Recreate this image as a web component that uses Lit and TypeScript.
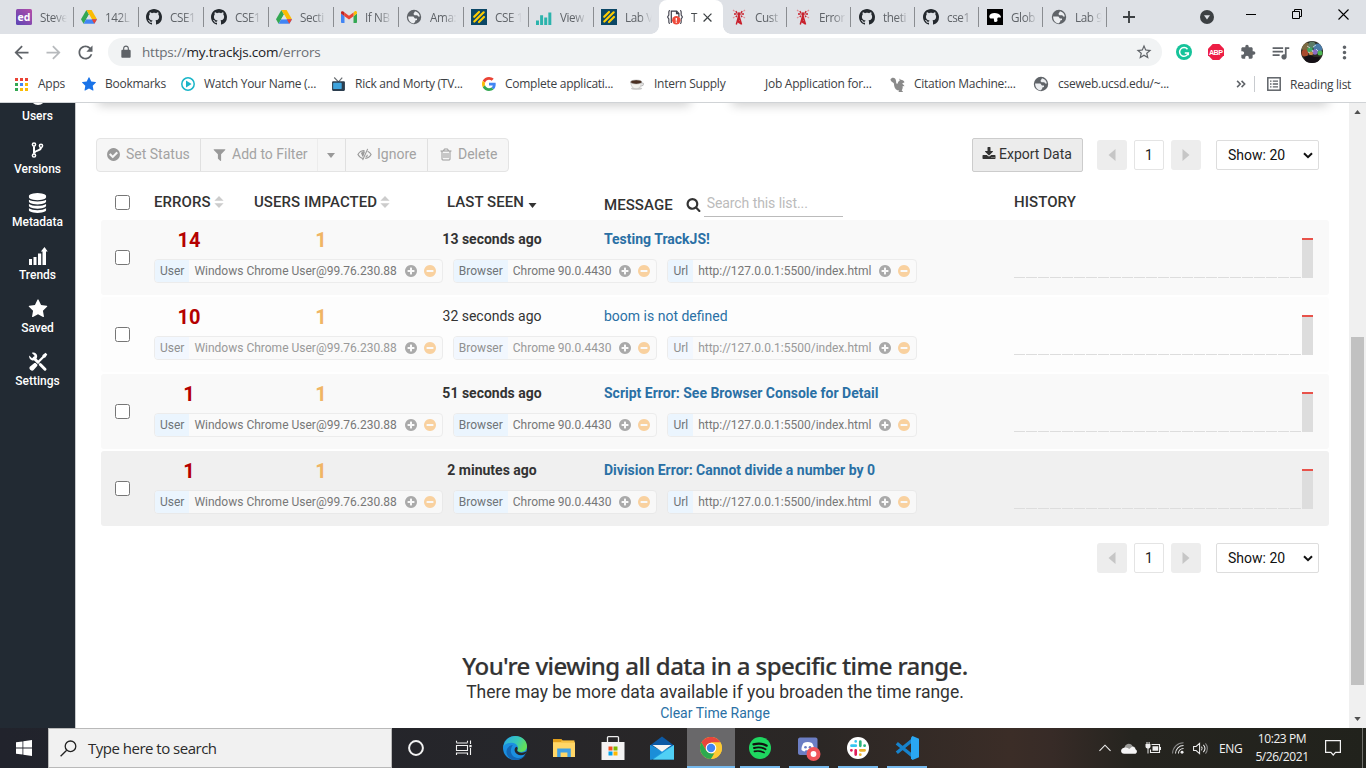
import { LitElement, html, svg, css, nothing, TemplateResult, SVGTemplateResult } from "lit";
import { customElement, property } from "lit/decorators.js";
import { classMap } from "lit/directives/class-map.js";

/* ---------- icon library ---------- */

type Glyph = { box: string; body: SVGTemplateResult };

const fa = (d: string): Glyph => ({ box: "0 0 1792 1792", body: svg`<path fill="currentColor" d=${d}/>` });
const md = (d: string): Glyph => ({ box: "0 0 24 24", body: svg`<path fill="currentColor" d=${d}/>` });
const art = (box: string, body: SVGTemplateResult): Glyph => ({ box, body });

const DISC =
  "q0 209-103 385.5t-279.5 279.5-385.5 103-385.5-103-279.5-279.5-103-385.5 103-385.5 279.5-279.5 385.5-103 385.5 103 279.5 279.5 103 385.5z";

const ICONS: Record<string, Glyph> = {
  star: fa("M1728 647q0 22-26 48l-363 354 86 500q1 7 1 20 0 21-10.5 35.5t-30.5 14.5q-19 0-40-12l-449-236-449 236q-22 12-40 12-21 0-31.5-14.5t-10.5-35.5q0-6 2-20l86-500-364-354q-25-27-25-48 0-37 56-46l502-73 225-455q19-41 49-41t49 41l225 455 502 73q56 9 56 46z"),
  database: fa("M896 768q237 0 443-43t325-127v170q0 69-103 128t-280 93.5-385 34.5-385-34.5-280-93.5-103-128v-170q119 84 325 127t443 43zm0 768q237 0 443-43t325-127v170q0 69-103 128t-280 93.5-385 34.5-385-34.5-280-93.5-103-128v-170q119 84 325 127t443 43zm0-384q237 0 443-43t325-127v170q0 69-103 128t-280 93.5-385 34.5-385-34.5-280-93.5-103-128v-170q119 84 325 127t443 43zm0-1152q208 0 385 34.5t280 93.5 103 128v128q0 69-103 128t-280 93.5-385 34.5-385-34.5-280-93.5-103-128v-128q0-69 103-128t280-93.5 385-34.5z"),
  checkCircle: fa("M1412 734q0-28-18-46l-91-90q-19-19-45-19t-45 19l-408 407-226-226q-19-19-45-19t-45 19l-91 90q-18 18-18 46 0 27 18 45l362 362q19 19 45 19 27 0 46-19l543-543q18-18 18-45zm252 162" + DISC),
  plusCircle: fa("M1344 960v-128q0-26-19-45t-45-19h-256v-256q0-26-19-45t-45-19h-128q-26 0-45 19t-19 45v256h-256q-26 0-45 19t-19 45v128q0 26 19 45t45 19h256v256q0 26 19 45t45 19h128q26 0 45-19t19-45v-256h256q26 0 45-19t19-45zm320-64" + DISC),
  minusCircle: fa("M1344 960v-128q0-26-19-45t-45-19h-768q-26 0-45 19t-19 45v128q0 26 19 45t45 19h768q26 0 45-19t19-45zm320-64" + DISC),
  filter: fa("M1595 295q17 41-14 70l-493 493v742q0 42-39 59-13 5-25 5-27 0-45-19l-256-256q-19-19-19-45v-486l-493-493q-31-29-14-70 17-39 59-39h1280q42 0 59 39z"),
  search: fa("M1216 832q0-185-131.5-316.5t-316.5-131.5-316.5 131.5-131.5 316.5 131.5 316.5 316.5 131.5 316.5-131.5 131.5-316.5zm512 832q0 52-38 90t-90 38q-54 0-90-38l-343-342q-179 124-399 124-143 0-273.5-55.5t-225-150-150-225-55.5-273.5 55.5-273.5 150-225 225-150 273.5-55.5 273.5 55.5 225 150 150 225 55.5 273.5q0 220-124 399l343 343q37 37 37 90z"),
  download: fa("M1344 1344q0-26-19-45t-45-19-45 19-19 45 19 45 45 19 45-19 19-45zm256 0q0-26-19-45t-45-19-45 19-19 45 19 45 45 19 45-19 19-45zm128-224v320q0 40-28 68t-68 28h-1472q-40 0-68-28t-28-68v-320q0-40 28-68t68-28h465l135 136q58 56 136 56t136-56l136-136h464q40 0 68 28t28 68zm-325-569q17 41-14 70l-448 448q-18 19-45 19t-45-19l-448-448q-31-29-14-70 17-39 59-39h256v-448q0-26 19-45t45-19h256q26 0 45 19t19 45v448h256q42 0 59 39z"),
  trash: fa("M704 736v576q0 14-9 23t-23 9h-64q-14 0-23-9t-9-23v-576q0-14 9-23t23-9h64q14 0 23 9t9 23zm256 0v576q0 14-9 23t-23 9h-64q-14 0-23-9t-9-23v-576q0-14 9-23t23-9h64q14 0 23 9t9 23zm256 0v576q0 14-9 23t-23 9h-64q-14 0-23-9t-9-23v-576q0-14 9-23t23-9h64q14 0 23 9t9 23zm128 724v-948h-896v948q0 22 7 40.5t14.5 27 10.5 8.5h832q3 0 10.5-8.5t14.5-27 7-40.5zm-672-1076h448l-48-117q-7-9-17-11h-317q-10 2-17 11zm928 32v64q0 14-9 23t-23 9h-96v948q0 83-47 143.5t-113 60.5h-832q-66 0-113-58.5t-47-141.5v-952h-96q-14 0-23-9t-9-23v-64q0-14 9-23t23-9h309l70-167q15-37 54-63t79-26h320q40 0 79 26t54 63l70 167h309q14 0 23 9t9 23z"),
  caretDown: art("0 0 8 5", svg`<path fill="currentColor" d="M0 0h8L4 5z"/>`),
  sort: art("0 0 10 14", svg`<path fill="currentColor" d="M5 1l4.6 4.8H.4zM5 13L.4 8.2h9.2z"/>`),
  triLeft: art("0 0 8 12", svg`<path fill="currentColor" d="M7.5 0v12L.5 6z"/>`),
  triRight: art("0 0 8 12", svg`<path fill="currentColor" d="M.5 0v12l7-6z"/>`),
  eyeSlash: art("0 0 16 14", svg`<g fill="none" stroke="currentColor" stroke-width="1.2"><path d="M6.6 11.2C4 10.700 2 9 1 7c1.400-2.600 4-4.300 7-4.300M11.300 3.500C13 4.200 14.300 5.500 15 7c-1.400 2.600-3.700 4-6.200 4.300"/><path d="M11.400 1L6 13M4.900 6.800C4.900 5 6.200 3.800 8 3.800M11 7.200c0 1.300-.7 2.300-1.800 2.800"/></g><path fill="currentColor" d="M8.500 4C6.500 4 5 5.200 5 7c0 1.200.6 2 1.500 2.600z"/>`),
  fork: art("0 0 14 18", svg`<g fill="none" stroke="currentColor" stroke-width="1.500"><circle cx="3.500" cy="3.500" r="1.600"/><circle cx="3.500" cy="14.500" r="1.600"/><circle cx="10.500" cy="4.800" r="1.600"/></g><path fill="none" stroke="currentColor" stroke-width="2" d="M3.500 5.200v7.600M10.500 6.500c0 4-6.500 2.200-6.800 5.800"/>`),
  trends: art("0 0 20 20", svg`<path fill="currentColor" d="M1 13h3v6H1zM5.500 11h3v8h-3zM10 7.500h3.200V19H10zM14.500 5.500h-1.600L16.500 1l3.200 4.500H18V19h-3.500z"/>`),
  wrench: art("0 0 20 20", svg`<path fill="none" stroke="currentColor" stroke-width="3" stroke-linecap="round" d="M6 6.200l4 4M12.300 12.500l4.700 4.700"/><path fill="currentColor" d="M1.200 3.600l2.800 2.600 2-.6.5-2L3.800 1C6-.1 8.900 1.300 9.200 4c.1 2.600-2 4.800-4.800 4.400C2 8 .7 5.800 1.200 3.600zM17.600.7l1.700 1.700-2 3.200-1.500.5-5 5-1.600-1.600 5-5 .4-1.600zM7.600 10.900l1.900 1.900-.3 1.200-3.800 4.300c-1.400 1.400-5.200-1.400-3.600-3.600l4.600-3.700z"/>`),
  user: art("0 0 20 20", svg`<circle cx="10" cy="10.500" r="7.500" fill="currentColor"/>`),
  chevron: art("0 0 10 7", svg`<path fill="none" stroke="currentColor" stroke-width="2" d="M1 1.200l4 4 4-4"/>`),

  github: art("0 0 16 16", svg`<path fill="#24292e" d="M8 0C3.580 0 0 3.580 0 8c0 3.540 2.290 6.530 5.470 7.590.4.070.55-.17.55-.38 0-.19-.01-.82-.01-1.490-2.010.37-2.530-.49-2.690-.94-.09-.23-.48-.94-.82-1.130-.28-.15-.68-.52-.01-.53.63-.01 1.080.58 1.230.82.72 1.210 1.870.87 2.330.66.070-.52.28-.87.51-1.070-1.780-.2-3.640-.89-3.640-3.950 0-.87.31-1.590.82-2.150-.08-.2-.36-1.020.08-2.120 0 0 .67-.21 2.200.82.64-.18 1.320-.27 2-.27s1.360.09 2 .27c1.530-1.040 2.200-.82 2.200-.82.44 1.100.16 1.920.08 2.120.51.56.82 1.270.82 2.150 0 3.070-1.870 3.750-3.650 3.950.29.25.54.73.54 1.480 0 1.070-.01 1.930-.01 2.200 0 .21.15.46.55.38A8.010 8.010 0 0 0 16 8c0-4.420-3.580-8-8-8z"/>`),
  globe: art("0 0 16 16", svg`<circle cx="8" cy="8" r="7.200" fill="#5f6368"/><path fill="#eceef1" d="M2.100 7.600h5.300l1.500 1.800H11v1.500l-1.700.6-.2 1.600-1.700 1.300C4.300 14.200 2.100 11.300 2.100 7.600zM9 2.200c2.600.5 4.600 2.700 4.900 5.300h-1.700l-.9-1.200H8.500L7.400 5l.9-1.400z"/>`),
  ed: art("0 0 16 16", svg`<defs><linearGradient id="edg" x1="0" y1="1" x2="1" y2="0"><stop offset="0" stop-color="#5b45b5"/><stop offset="1" stop-color="#b44da8"/></linearGradient></defs><rect width="16" height="16" rx="1.500" fill="url(#edg)"/><text x="8" y="11.800" text-anchor="middle" font-family="Open Sans, sans-serif" font-weight="700" font-size="10.500" fill="#fff">ed</text>`),
  drive: art("0 0 16 14", svg`<path fill="#34a853" d="M5.400 0L0 9.300 2.600 13.800 8 4.500z"/><path fill="#fbbc04" d="M5.400 0h5.200L16 9.300h-5.200z"/><path fill="#4285f4" d="M5.200 9.300H16l-2.600 4.500H2.600z"/><path fill="#ea4335" d="M13.300 13.800L10.800 9.300H16z"/><path fill="#dee1e6" d="M8 4.500l2.800 4.800H5.200z"/>`),
  gmail: art("0 0 16 12", svg`<path fill="#4285f4" d="M.8 12H3.500V5.200L0 2.600v8.600c0 .4.400.8.800.8z"/><path fill="#34a853" d="M12.500 12h2.700c.4 0 .8-.4.8-.8V2.600l-3.500 2.600z"/><path fill="#fbbc04" d="M12.500 1.400v3.800L16 2.600V1.500c0-1.400-1.500-2-2.500-1z"/><path fill="#ea4335" d="M3.500 5.200V1.400L8 4.700l4.500-3.300v3.800L8 8.600z"/><path fill="#c5221f" d="M0 1.500v1.100l3.500 2.600V1.400L2.400.5C1.300-.3 0 .3 0 1.500z"/>`),
  ucsd: art("0 0 16 16", svg`<rect width="16" height="16" fill="#0b4766"/><path stroke="#ffcd00" stroke-width="2.200" stroke-linecap="round" d="M3.200 7.800L8 3M3.300 12.500L12.700 3.300M8 13l5-5"/>`),
  bars: art("0 0 14 14", svg`<path fill="#2bb3ac" d="M0 10h2.600v4H0zM3.600 5.500h2.600V14H3.600zM7.200 7.500h2.600V14H7.200zM10.800 3h2.600v11h-2.600z"/>`),
  trackjs: art("0 0 16 16", svg`<path fill="none" stroke="#4a4a55" stroke-width="1.200" d="M3 1.500C1.300 1.500 2 4 1.800 6L.6 8l1.200 2c.2 2-.5 4.500 1.200 4.500M13 1.500c1.700 0 1 2.500 1.200 4.500l1.200 2-1.200 2c-.1 2 .4 4.500-1.200 4.500"/><path fill="#fff" stroke="#3d3d4a" stroke-width="1.200" d="M4.300 14V2.200h5.400l2.200 2.300V8M9.500 2.200v2.500h2.400"/><circle cx="9.300" cy="11.300" r="4.200" fill="#ee4b3c"/><path stroke="#fff" stroke-width="1.300" d="M9.300 8.900v2.900M9.300 12.600v1.200"/>`),
  tower: art("0 0 16 16", svg`<g fill="none" stroke="#c8202c" stroke-width="1.400"><path d="M5.300 15.500L7.800 6l2.800 9.500M6 12.500h4M7 9.500h2.200M5.900 12.500l3.300-3M10.200 15l-4-2.700"/><path d="M4.800 2.200L6 4M3 5h2.500M4.800 8L6 6.600M11.200 2.200L10 4M13 5h-2.500M11.200 8L10 6.600"/></g><circle cx="8" cy="5" r="1.800" fill="#c8202c"/><path stroke="#e58d93" stroke-width="1.200" d="M2 1l1.500 1.300M14 1l-1.500 1.300M2 9l1.500-1M14 9l-1.500-1"/>`),
  globus: art("0 0 16 16", svg`<rect width="16" height="16" fill="#000"/><path fill="#fff" d="M2.300 7C2.700 4.800 5 3.900 7.500 3.900c2.700 0 5.300.8 6.200 3.100l.3 1.500H11l-.8 1.200.3 2.300c-.9 1.300-2.600 1.400-3.300.6L6.800 9.500H3.700C2.600 9.300 2.200 8.100 2.300 7z"/>`),
  close: md("M19 6.400L17.600 5 12 10.600 6.400 5 5 6.400 10.600 12 5 17.600 6.400 19 12 13.400 17.600 19 19 17.600 13.400 12z"),
  plus: art("0 0 12 12", svg`<path stroke="#3c4043" stroke-width="1.900" d="M6 0v12M0 6h12"/>`),
  tabSearch: art("0 0 14 14", svg`<circle cx="7" cy="7" r="7" fill="#3c4043"/><path fill="#dee1e6" d="M4 5.200h6L7 9.500z"/>`),
  winMin: art("0 0 11 11", svg`<path stroke="#000" d="M0 5.500h10"/>`),
  winMax: art("0 0 11 11", svg`<path fill="none" stroke="#000" d="M.5 2.500h7v7h-7zM2.500 2.500v-2h7v7h-2"/>`),
  winClose: art("0 0 11 11", svg`<path fill="none" stroke="#000" stroke-width="1.100" d="M.5.500l10 10M10.500.5l-10 10"/>`),
  back: md("M20 11H7.830l5.590-5.590L12 4l-8 8 8 8 1.410-1.410L7.830 13H20v-2z"),
  forward: md("M4 11h12.170l-5.590-5.590L12 4l8 8-8 8-1.410-1.410L16.170 13H4v-2z"),
  refresh: md("M17.650 6.350C16.200 4.900 14.210 4 12 4c-4.420 0-7.990 3.580-7.990 8s3.570 8 7.990 8c3.730 0 6.840-2.550 7.730-6h-2.080c-.82 2.330-3.040 4-5.650 4-3.310 0-6-2.690-6-6s2.690-6 6-6c1.660 0 3.140.69 4.220 1.780L13 11h7V4l-2.350 2.350z"),
  lock: md("M18 8h-1V6c0-2.760-2.240-5-5-5S7 3.240 7 6v2H6c-1.100 0-2 .9-2 2v10c0 1.100.9 2 2 2h12c1.100 0 2-.9 2-2V10c0-1.100-.9-2-2-2zM9 8V6c0-1.660 1.340-3 3-3s3 1.340 3 3v2z"),
  starLine: md("M22 9.240l-7.190-.62L12 2 9.190 8.630 2 9.240l5.460 4.730L5.820 21 12 17.270 18.180 21l-1.630-7.030L22 9.240zM12 15.400l-3.760 2.270 1-4.280-3.320-2.880 4.380-.38L12 6.100l1.710 4.040 4.380.38-3.320 2.880 1 4.280L12 15.400z"),
  puzzle: md("M20.500 11H19V7c0-1.100-.9-2-2-2h-4V3.500C13 2.120 11.880 1 10.500 1S8 2.120 8 3.500V5H4c-1.100 0-1.990.9-1.990 2v3.800H3.500c1.490 0 2.700 1.210 2.700 2.700s-1.210 2.700-2.700 2.700H2V20c0 1.100.9 2 2 2h3.800v-1.500c0-1.490 1.210-2.700 2.700-2.700 1.490 0 2.700 1.210 2.700 2.700V22H17c1.100 0 2-.9 2-2v-4h1.500c1.380 0 2.500-1.120 2.500-2.500S21.880 11 20.500 11z"),
  queue: md("M15 6H3v2h12V6zm0 4H3v2h12v-2zM3 16h8v-2H3v2zM17 6v8.180c-.31-.11-.65-.18-1-.18-1.660 0-3 1.340-3 3s1.340 3 3 3 3-1.340 3-3V8h3V6h-5z"),
  dots: md("M12 8c1.100 0 2-.9 2-2s-.9-2-2-2-2 .9-2 2 .9 2 2 2zm0 2c-1.100 0-2 .9-2 2s.9 2 2 2 2-.9 2-2-.9-2-2-2zm0 6c-1.100 0-2 .9-2 2s.9 2 2 2 2-.9 2-2-.9-2-2-2z"),
  grammarly: art("0 0 16 16", svg`<circle cx="8" cy="8" r="8" fill="#15c39a"/><path fill="none" stroke="#fff" stroke-width="1.500" d="M11.500 5.200A4.400 4.400 0 1 0 12.300 9H8.800M12.300 8.300v3"/>`),
  abp: art("0 0 16 16", svg`<path fill="#ed1e45" d="M4.700 0h6.600L16 4.700v6.600L11.300 16H4.700L0 11.300V4.700z"/><text x="8" y="10.700" text-anchor="middle" font-family="Liberation Sans, sans-serif" font-weight="700" font-size="7.200" textLength="14" fill="#fff">ABP</text>`),
  avatar: art("0 0 22 22", svg`<defs><clipPath id="avc"><circle cx="11" cy="11" r="11"/></clipPath></defs><g clip-path="url(#avc)"><rect width="22" height="22" fill="#2a2a22"/><circle cx="5" cy="6" r="4.500" fill="#7d6a42"/><circle cx="11" cy="4" r="3.500" fill="#5b7c66"/><circle cx="17" cy="7" r="4.500" fill="#4a7ba8"/><circle cx="4" cy="12" r="3.500" fill="#a84a2c"/><circle cx="9" cy="9" r="2.800" fill="#3fa863"/><circle cx="14" cy="11" r="2.800" fill="#8a6cc4"/><circle cx="19" cy="12" r="2.500" fill="#4fb854"/><circle cx="10" cy="12.500" r="2" fill="#c98a48"/><path fill="#151016" d="M3 16c3-1.500 5-1 7-2l3 2 6 0-2 6H5z"/><path stroke="#d5efe9" stroke-width=".8" fill="none" d="M6 5l3 2M12 6l3-2M15 8l2 2M7 11l2 1M11 9l1 2"/></g>`),
  apps: art("0 0 13 13", svg`<path fill="#ea4335" d="M0 0h3v3H0zM5 0h3v3H5zM10 0h3v3h-3z"/><path fill="#34a853" d="M0 5h3v3H0zM0 10h3v3H0z"/><path fill="#4285f4" d="M5 5h3v3H5z"/><path fill="#fbbc04" d="M10 5h3v3h-3zM5 10h3v3H5zM10 10h3v3h-3z"/>`),
  play: art("0 0 14 14", svg`<circle cx="7" cy="7" r="6.200" fill="#fff" stroke="#19b5c8" stroke-width="1.500"/><path fill="#19b5c8" d="M5 3.600v6.800L10.600 7z"/>`),
  tv: art("0 0 14 14", svg`<path stroke="#6b6f73" stroke-width="1.100" fill="none" d="M3 .5L7 4.500 10.500.5"/><rect x="1" y="4" width="12" height="9" rx="1" fill="#2c3e4f"/><rect x="2" y="5.300" width="8" height="6" rx=".8" fill="#3fa4dd"/>`),
  google: art("0 0 48 48", svg`<path fill="#EA4335" d="M24 9.500c3.540 0 6.710 1.220 9.210 3.600l6.850-6.850C35.900 2.380 30.470 0 24 0 14.620 0 6.510 5.380 2.560 13.220l7.980 6.190C12.430 13.720 17.740 9.500 24 9.500z"/><path fill="#4285F4" d="M46.980 24.550c0-1.570-.15-3.090-.38-4.550H24v9.020h12.940c-.58 2.960-2.260 5.480-4.780 7.180l7.730 6c4.510-4.180 7.090-10.360 7.090-17.650z"/><path fill="#FBBC05" d="M10.530 28.590c-.48-1.450-.76-2.990-.76-4.590s.27-3.140.76-4.590l-7.980-6.190C.92 16.460 0 20.120 0 24c0 3.880.92 7.540 2.560 10.780l7.970-6.190z"/><path fill="#34A853" d="M24 48c6.480 0 11.930-2.130 15.890-5.810l-7.730-6c-2.150 1.450-4.920 2.300-8.160 2.300-6.260 0-11.570-4.220-13.470-9.910l-7.980 6.190C6.510 42.620 14.620 48 24 48z"/>`),
  coffee: art("0 0 16 12", svg`<ellipse cx="7" cy="10.300" rx="6" ry="1.300" fill="#c9c9c9"/><path fill="#f1f0ec" stroke="#aaa" stroke-width=".5" d="M.8 3.500C1 8 3 10.500 6.500 10.500S12 8 12.400 3.500z"/><path fill="none" stroke="#bbb" stroke-width="1.200" d="M12.200 4.500c2.700-.6 3.200 2.500-.8 3.300"/><ellipse cx="6.600" cy="3.300" rx="6" ry="2.100" fill="#4a2f21" stroke="#999" stroke-width=".5"/>`),
  squirrel: art("0 0 16 16", svg`<path fill="#8a8a8a" d="M.5 2.500C2-.2 6.300.3 6.500 4.500c0 2 .5 3 1.500 2.800C8.500 5.500 9 4.500 10.300 4L10 1.500l1.500 1.500C13.500 3 15 4.300 15.500 5.500L13 6.800c1 1 2 1.700 2.500 3l-2-.3c.3 2-.3 3.500-1 4.500l1.500 2H9l.8-1.500C6.800 14.500 5 12 4.500 9.500 4.200 7.500 4.400 6.500 3.500 6 1.800 5.700.5 4 .5 2.500z"/>`),
  more: art("0 0 9 7", svg`<path fill="none" stroke="#5f6368" stroke-width="1.400" d="M1 .7l2.800 2.800L1 6.300M5 .7l2.800 2.800L5 6.300"/>`),
  readList: art("0 0 14 14", svg`<rect x=".8" y=".8" width="12.400" height="12.400" fill="none" stroke="#5f6368" stroke-width="1.500"/><path stroke="#5f6368" stroke-width="1.300" d="M3 4.200h1.500M3 7h1.500M3 9.800h1.500M5.800 4.200H11M5.800 7H11M5.800 9.800H11"/>`),

  windows: art("0 0 16 16", svg`<path fill="#fff" d="M0 2.300L6.500 1.400v6.200H0zM7.300 1.300L16 0v7.600H7.300zM0 8.400h6.500v6.200L0 13.700zM7.300 8.400H16V16l-8.700-1.300z"/>`),
  lens: art("0 0 17 17", svg`<circle cx="10.500" cy="6.300" r="5.300" fill="none" stroke="#222" stroke-width="1.300"/><path stroke="#222" stroke-width="1.300" d="M6.700 10.200L.6 16.300"/>`),
  cortana: art("0 0 18 18", svg`<circle cx="9" cy="9" r="6.900" fill="none" stroke="#f2f2f2" stroke-width="2"/>`),
  taskView: art("0 0 16 16", svg`<g fill="none" stroke="#f2f2f2" stroke-width="1.100"><path d="M.5 2.500V.8M11.500 2.500V.8M.5 3h11M.5 5.500h11v5H.5zM.5 15v-2h11v2M14.500.5v3.500M14.500 8v7"/></g><rect x="13.400" y="5" width="2.200" height="2.200" fill="#f2f2f2"/>`),
  edge: art("0 0 24 24", svg`<defs><linearGradient id="eg1" x1="0" y1="0" x2="1" y2=".4"><stop offset="0" stop-color="#2aa9e6"/><stop offset=".6" stop-color="#38c8b8"/><stop offset="1" stop-color="#62e05a"/></linearGradient></defs><circle cx="12" cy="12" r="12" fill="#1b8fe0"/><path fill="url(#eg1)" d="M.5 10.500C1.500 4 6.500 0 12.300 0 19 0 24 4.800 24 10.300c0 3.500-2.600 5.700-5.800 5.700-2.600 0-4.300-.9-4-2 .5-1 1.200-1.800.6-3.500C13.900 8 11.400 6.700 8.500 6.700 5 6.700 1.500 8.500.5 10.500z"/><path fill="#1367b5" d="M8.200 12.500c-1.500 4.500 2 9.200 6.500 9.500 3 .2 5.500-.7 8-3C20.500 22 16.500 24 12.300 24 6.500 24 3 19 3.500 15c.4-3.300 3-5.500 6.500-6-1.200 1-1.500 2.500-1.800 3.500z"/><path fill="#26262b" d="M14.200 14c-.3 1.200 1.600 2.700 4.500 2.700 2 0 3.500-.6 5-1.700-.5 1.500-1 2.500-1.500 3-4 2.500-9.500 1-10.500-3-.5-2 .5-4 2-4.300 1.300.9 1 2.200.5 3.300z"/>`),
  explorer: art("0 0 22 18", svg`<path fill="#e19f1c" d="M0 0h8.500l1.300 1.800H21V6H0z"/><path fill="#ffd667" d="M0 3.200h22V18H0z"/><path fill="#f7c243" d="M8.500 1.500H21.500v2H8z"/><path fill="#3f9fe4" d="M4.200 9.500h13.600V18h-3.400v-4.500H7.600V18H4.200z"/>`),
  store: art("0 0 24 24", svg`<path fill="none" stroke="#eee" stroke-width="1.300" d="M6.500 7V1.500c0-.6.400-.9.900-.9h9.200c.5 0 .9.300.9.900V7"/><path fill="#f3f3f3" d="M.5 6h23v18H.5z"/><path fill="#f25022" d="M7.500 10.500h4v4h-4z"/><path fill="#7fba00" d="M12.500 10.500h4v4h-4z"/><path fill="#00a4ef" d="M7.500 15.500h4v4h-4z"/><path fill="#ffb900" d="M12.500 15.500h4v4h-4z"/>`),
  mail: art("0 0 24 23", svg`<path fill="#0c59a4" d="M0 9L12 0l12 9v2H0z"/><path fill="#1f9ae0" d="M0 8.500l12 6 12-6V23H0z"/><path fill="#50d0f5" d="M24 8.500L3 23h21z"/><path fill="#1b8ed8" d="M0 8.500V23h1.500L12 15.500z"/><path fill="#f5f5f5" d="M2.500 8.500h19L12 15.200z"/>`),
  chrome: art("0 0 24 24", svg`<circle cx="12" cy="12" r="11" fill="#fcc934"/><path fill="#e8453c" d="M12 1c4 0 7.600 2.200 9.500 5.500H12L7.200 14.700 2.500 6.500C4.400 3.200 8 1 12 1z"/><path fill="#2da94f" d="M2.500 6.500L7.300 14.800 12 17.500h4.700L12 23C6 23 1 18 1 12c0-2 .6-3.900 1.500-5.500z"/><path fill="#fcc934" d="M21.500 6.500A11 11 0 0 1 12 23l4.800-8.300L16.500 9 12 6.500z"/><circle cx="12" cy="12" r="5.300" fill="#fff"/><circle cx="12" cy="12" r="4.200" fill="#4285f4"/>`),
  spotify: art("0 0 22 22", svg`<circle cx="11" cy="11" r="11" fill="#1ed760"/><g fill="none" stroke="#111" stroke-linecap="round"><path stroke-width="2.200" d="M4.500 7.400c4.500-1.300 9.500-.9 13.200 1.300"/><path stroke-width="1.900" d="M5 11c4-1.100 8.200-.6 11.500 1.300"/><path stroke-width="1.600" d="M5.400 14.400c3.500-.8 6.800-.4 9.700 1.200"/></g>`),
  discord: art("0 0 24 24", svg`<path fill="#6c7ec4" d="M3 1.500h15.500C20 1.500 20.500 2.500 20.500 3.500v19l-4-3.500H3C2 19 1 18 1 17V3.500c0-1 .8-2 2-2z"/><path fill="#fff" d="M6.500 7c2.700-1.200 5.700-1.200 8.500 0 1.500 2.200 2.200 4.500 2 7-1 .9-2.200 1.300-3.200 1.500l-.8-1.300H8.600l-.9 1.300C6.500 15.200 5.400 14.800 4.500 14c-.2-2.500.5-4.800 2-7z"/><circle cx="8.500" cy="11.300" r="1.300" fill="#6c7ec4"/><circle cx="13" cy="11.300" r="1.300" fill="#6c7ec4"/><circle cx="16.500" cy="18" r="7" fill="#f0555a"/><circle cx="16.500" cy="18" r="2.900" fill="#fff"/>`),
  slack: art("0 0 24 24", svg`<circle cx="12" cy="12" r="11" fill="#fff"/><g stroke-width="2.700" stroke-linecap="round" fill="none"><path stroke="#36c5f0" d="M5.500 9.700h4.300M9.700 5.300v.2"/><path stroke="#2eb67d" d="M14.300 5.500v4.300M18.500 9.700h.2"/><path stroke="#ecb22e" d="M14.300 14.300h4.300M14.300 18.500v.2"/><path stroke="#e01e5a" d="M9.700 14.300v4.300M5.500 14.300h-.2"/></g>`),
  vscode: art("0 0 24 24", svg`<path fill="none" stroke="#1783cc" stroke-width="3.400" d="M17.500 4L1.800 16.700M1.800 7.300L17.500 20"/><path fill="#2aa7f2" d="M17.500 0L24 2.800v18.400L17.500 24l-1.500-1.500V1.500z"/>`),
  up: art("0 0 13 8", svg`<path fill="none" stroke="#eee" stroke-width="1.200" d="M.5 7l6-6 6 6"/>`),
  cloud: art("0 0 16 11", svg`<path fill="#9b9b98" d="M3.500 4.500C4.500.5 9.500-.5 11.500 3l3 1.500-10 3z"/><path fill="#f5f5f5" d="M3 4.800c2.300-1 4.200.2 5.200 1.300L11 3.800c2 0 3.500 1.200 3.700 2.700 2 1 1.500 4.300-1 4.300H3.200C-.8 10.800-1 5.500 3 4.800z"/>`),
  battery: art("0 0 16 12", svg`<path fill="none" stroke="#eee" stroke-width="1.100" d="M6.500 2.500h8v8h-9V7.500"/><path fill="#eee" d="M7.500 4.300h5.700v4.500H7.500zM15 5h1v3h-1zM.5 2h5v2.500C5.500 6 4 6.500 3.500 6.500v5h-1v-5C1.500 6.500.5 5.500.5 4.500zM1.500 0h1v2h-1zM3.600 0h1v2h-1z"/>`),
  wifi: art("0 0 13 13", svg`<g fill="none" stroke="#eee" stroke-width="1.100"><path stroke="#888" d="M.6 12.500C.6 6 6 .8 12.500.8"/><path d="M3.800 12.500c0-5 4-8.700 8.700-8.700M7 12.500C7 9.200 9.500 7 12.500 7"/></g><circle cx="10.900" cy="11" r="1.600" fill="#eee"/>`),
  volume: art("0 0 17 13", svg`<g fill="none" stroke="#eee" stroke-width="1.100"><path d="M.6 4.300h2.700L7 1v11L3.300 8.700H.6zM9 4.500c1 1.200 1 2.800 0 4M11 2.700c2 2.200 2 5.400 0 7.600"/><path stroke="#888" d="M13.200 1c2.700 3 2.700 8 0 11"/></g>`),
  note: art("0 0 16 16", svg`<path fill="none" stroke="#f2f2f2" stroke-width="1.200" d="M.6.600h14.800v11.800H10.500L8.200 15l-2.300-2.600H.6z"/>`),
};

@customElement("ui-icon")
export class UiIcon extends LitElement {
  @property() name = "";
  static styles = css`
    :host { display: inline-flex; width: 16px; height: 16px; flex: none; }
    svg { width: 100%; height: 100%; display: block; overflow: visible; }
  `;
  render() {
    const g = ICONS[this.name];
    return g ? html`<svg viewBox=${g.box} aria-hidden="true">${g.body}</svg>` : nothing;
  }
}

const icon = (name: string, cls = ""): TemplateResult => html`<ui-icon class=${cls} name=${name}></ui-icon>`;

/* ---------- browser frame ---------- */

const TABS: [string, string][] = [
  ["ed", "Steve"], ["drive", "142L"], ["github", "CSE1"], ["github", "CSE1"], ["drive", "Secti"],
  ["gmail", "If NB"], ["globe", "Ama:"], ["ucsd", "CSE 1"], ["bars", "View"], ["ucsd", "Lab V"],
  ["trackjs", "T"],
  ["tower", "Cust"], ["tower", "Error"], ["github", "theti"], ["github", "cse1"], ["globus", "Glob"], ["globe", "Lab 9"],
];

const BOOKMARKS: [string, string, number][] = [
  ["apps", "Apps", 67], ["star", "Bookmarks", 99], ["play", "Watch Your Name (...", 151],
  ["tv", "Rick and Morty (TV...", 150], ["google", "Complete applicati...", 149],
  ["coffee", "Intern Supply", 111], ["", "Job Application for...", 149],
  ["squirrel", "Citation Machine:...", 143], ["globe", "cseweb.ucsd.edu/~...", 203],
];

@customElement("browser-chrome")
export class BrowserChrome extends LitElement {
  static styles = css`
    :host { display: block; height: 103px; flex: none; font: 12px "Open Sans", "Noto Sans", sans-serif; color: #3c4043; background: #fff; box-sizing: border-box; border-bottom: 1px solid #d0d3d6; }
    .strip { display: flex; height: 34px; background: #dee1e6; padding-left: 9px; box-sizing: border-box; }
    .tab { display: flex; align-items: center; width: 65px; box-sizing: border-box; padding-left: 7px; gap: 8px; flex: none; background: linear-gradient(#8a8d91, #8a8d91) right center / 1px 20px no-repeat; color: #5f6368; }
    .tab.late { width: 64px; padding-left: 8px; }
    .tab.active, .tab.before { background-image: none; }
    .tab.active { background: #fff; border-radius: 8px 8px 0 0; color: #45494d; gap: 8px; }
    .tab .name { width: 28px; overflow: hidden; white-space: nowrap; font-size: 11.7px; letter-spacing: -0.4px; mask-image: linear-gradient(90deg, #000 50%, transparent 96%); }
    .tab.active .name { width: 10px; }
    .tab.active .x { width: 15px; height: 15px; margin-left: -9px; color: #3c4043; }
    .foot { width: 8px; height: 34px; margin-left: -8px; flex: none; background: radial-gradient(circle at 0 0, transparent 7.5px, #fff 8px) 0 bottom / 8px 8px no-repeat; }
    .foot.r { margin: 0 -8px 0 0; background: radial-gradient(circle at 100% 0, transparent 7.5px, #fff 8px) 0 bottom / 8px 8px no-repeat; }
    .add { width: 12px; height: 12px; margin: 11px 0 0 16px; }
    .controls { display: flex; margin-left: 65px; gap: 35px; padding-top: 9px; }
    .controls ui-icon { width: 11px; height: 11px; }
    .controls .ts { width: 14px; height: 14px; margin: 1px -3px 0 0; }
    .bar { display: flex; height: 36px; align-items: center; padding-left: 5px; color: #5f6368; }
    .cell { width: 32px; display: flex; justify-content: center; flex: none; }
    .cell ui-icon { width: 21px; height: 21px; }
    .cell.dim { color: #b7babd; }
    .cell .s16 { width: 16px; height: 16px; }
    .cell .s22 { width: 22px; height: 22px; }
    .omni { display: flex; align-items: center; width: 1054px; height: 28px; margin: 0 6px 0 7px; border-radius: 14px; background: #f1f3f4; box-sizing: border-box; padding: 0 9px 0 11px; }
    .omni .lk { width: 14px; height: 14px; }
    .omni .st { width: 18px; height: 18px; margin-left: auto; }
    .url { margin-left: 9px; font-size: 13.5px; letter-spacing: -0.2px; color: #6a6e73; white-space: nowrap; }
    .url b { font-weight: 400; color: #202124; }
    .marks { display: flex; height: 28px; align-items: center; padding-left: 14px; letter-spacing: -0.26px; }
    .mark { display: flex; align-items: center; gap: 9px; white-space: nowrap; flex: none; }
    .mark span { margin-top: -1px; }
    .mark ui-icon { width: 15px; height: 15px; color: #5f6368; }
    .mark .star { color: #1a73e8; width: 16px; margin-right: -1px; }
    .mark .apps { width: 13px; height: 13px; margin: 0 1px 0 1px; }
    .mark .google, .mark .play { width: 14px; height: 14px; margin: 0 0 0 1px; }
    .mark .globe { width: 16px; height: 16px; }
    .more { width: 10px; height: 8px; }
    .rule { width: 1px; height: 16px; background: #c8cbcf; margin: 0 12px 0 8px; }
    .rl { width: 14px; height: 14px; margin-right: 9px; }
    .w67 { width: 67px } .w99 { width: 99px } .w151 { width: 151px } .w150 { width: 150px } .w149 { width: 149px }
    .w111 { width: 111px } .w143 { width: 143px } .w203 { width: 203px }
  `;
  render() {
    return html`
      <div class="strip">
        ${TABS.map(([ic, name], i) => i === 10
          ? html`<span class="foot"></span><div class="tab late active">${icon(ic)}<span class="name">${name}</span>${icon("close", "x")}</div><span class="foot r"></span>`
          : html`<div class=${classMap({ tab: true, late: i > 10, before: i === 9 })}>${icon(ic)}<span class="name">${name}</span></div>`)}
        ${icon("plus", "add")}
        <div class="controls">${icon("tabSearch", "ts")}${icon("winMin")}${icon("winMax")}${icon("winClose")}</div>
      </div>
      <div class="bar">
        <span class="cell">${icon("back")}</span><span class="cell dim">${icon("forward")}</span><span class="cell">${icon("refresh")}</span>
        <div class="omni">${icon("lock", "lk")}<span class="url">https://<b>my.trackjs.com</b>/errors</span>${icon("starLine", "st")}</div>
        <span class="cell">${icon("grammarly", "s16")}</span><span class="cell">${icon("abp", "s16")}</span>
        <span class="cell">${icon("puzzle", "s16")}</span><span class="cell">${icon("queue")}</span>
        <span class="cell">${icon("avatar", "s22")}</span><span class="cell">${icon("dots")}</span>
      </div>
      <div class="marks">
        ${BOOKMARKS.map(([ic, name, w]) => html`<span class="mark w${w}">${icon(ic, ic)}<span>${name}</span></span>`)}
        ${icon("more", "more")}<span class="rule"></span>${icon("readList", "rl")}<span>Reading list</span>
      </div>`;
  }
}

/* ---------- page ---------- */

type ErrorRow = { errors: number; users: number; seen: string; message: string; read?: boolean; hover?: boolean };

const ROWS: ErrorRow[] = [
  { errors: 14, users: 1, seen: "13 seconds ago", message: "Testing TrackJS!" },
  { errors: 10, users: 1, seen: "32 seconds ago", message: "boom is not defined", read: true },
  { errors: 1, users: 1, seen: "51 seconds ago", message: "Script Error: See Browser Console for Detail" },
  { errors: 1, users: 1, seen: "2 minutes ago", message: "Division Error: Cannot divide a number by 0", hover: true },
];

const TAGS: [string, string][] = [
  ["User", "Windows Chrome User@99.76.230.88"],
  ["Browser", "Chrome 90.0.4430"],
  ["Url", "http://127.0.0.1:5500/index.html"],
];

const HISTORY = [...Array(24).fill(0), 1];

@customElement("error-list")
export class ErrorList extends LitElement {
  static styles = css`
    :host { display: block; padding: 0 20px 0 25px; }
    .grid { display: grid; grid-template-columns: 53px 70px 175px 205px 357px 1fr; }
    .head { height: 48px; box-sizing: border-box; padding-top: 12px; align-items: center; font: 500 15px/20px Roboto, sans-serif; color: #333; white-space: nowrap; letter-spacing: 0.06px; }
    .head > * { display: flex; align-items: center; }
    .sort { width: 10px; height: 14px; margin-left: 3px; color: #ccc; }
    .desc { width: 9px; height: 5px; margin: 6px 0 0 4px; }
    .hseen { padding-left: 48px; }
    .husers { margin-left: 30px; }
    .hmsg { padding-top: 5px; }
    .hmsg .lens { width: 15px; height: 15px; margin-left: 13px; }
    .search { width: 139px; height: 26px; box-sizing: border-box; margin: -1px 0 0 3px; padding-left: 3px; border-bottom: 1px solid #bbb; font-weight: 400; font-size: 14px; color: #bbb; line-height: 24px; letter-spacing: -0.08px; }
    .box { width: 13px; height: 13px; border: 1px solid #767676; border-radius: 2.5px; background: #fff; margin-left: 14px; }
    .row { height: 75px; margin-bottom: 2px; border-radius: 3px; background: #f9f9f9; align-items: center; }
    .row.read { background: #fdfdfd; }
    .row.hover { background: #f0f0f0; }
    .main { display: grid; grid-template-columns: 70px 194px 148px 1fr; grid-template-rows: 39px 24px; grid-column: 2 / 6; height: 75px; white-space: nowrap; }
    .main > span { line-height: 20px; padding-top: 9px; text-align: center; }
    .main > .n { font: 700 20px/23px Roboto, sans-serif; color: #b50000; }
    .main > .u { font: 700 20px/23px Roboto, sans-serif; color: #f0b564; }
    .seen { font: 700 14px Roboto, sans-serif; color: #333; }
    .main > .msg { font: 700 14px Roboto, sans-serif; color: #2a70a5; text-align: left; padding-left: 38px; line-height: 20px; }
    .read .seen, .read .main > .msg { font-weight: 400; }
    .tags { grid-column: 1 / 5; display: flex; gap: 10px; }
    .tag { display: flex; height: 24px; box-sizing: border-box; border: 1px solid #ececec; border-radius: 4px; overflow: hidden; background: #fafafa; font: 12px/22px Roboto, sans-serif; color: #777; }
    .tag b { font-weight: 400; background: #ebf5fe; padding: 0 5px; color: #6f7478; }
    .tag span { padding: 0 7px 0 5px; }
    .tag ui-icon { width: 14px; height: 14px; margin-top: 4px; color: #aaa; }
    .tag .minus { color: #f9d19f; margin: 4px 5px 0 5px; }
    .read .tag { color: #999; }
    .read .tag b { background: #f2f7fe; color: #909090; }
    .hover .tag { background: #f8f8f8; border-color: #e9e9e9; }
    .row .hist { display: flex; grid-column: 6; align-items: flex-end; gap: 1px; height: 40px; margin-left: 53px; }
    .bar { width: 11px; height: 1px; background: #ddd; }
    .bar.on { height: 38px; border-top: 2px solid #e8524a; }
    .hh { padding-left: 53px; }
  `;
  render() {
    return html`
      <div class="grid head">
        <span><span class="box"></span></span>
        <span>ERRORS${icon("sort", "sort")}</span>
        <span class="husers">USERS IMPACTED${icon("sort", "sort")}</span>
        <span class="hseen">LAST SEEN${icon("caretDown", "desc")}</span>
        <span class="hmsg">MESSAGE${icon("search", "lens")}<span class="search">Search this list...</span></span>
        <span class="hh">HISTORY</span>
      </div>
      ${ROWS.map((r) => html`
        <div class=${classMap({ grid: true, row: true, read: !!r.read, hover: !!r.hover })}>
          <span class="box"></span>
          <div class="main">
            <span class="n">${r.errors}</span><span class="u">${r.users}</span><span class="seen">${r.seen}</span><span class="msg">${r.message}</span>
            <div class="tags">${TAGS.map(([k, v]) => html`<div class="tag"><b>${k}</b><span>${v}</span>${icon("plusCircle")}${icon("minusCircle", "minus")}</div>`)}</div>
          </div>
          <div class="hist">${HISTORY.map((v) => html`<i class=${classMap({ bar: true, on: v > 0 })}></i>`)}</div>
        </div>`)}`;
  }
}

const NAV: [string, string][] = [
  ["user", "Users"], ["fork", "Versions"], ["database", "Metadata"], ["trends", "Trends"], ["star", "Saved"], ["wrench", "Settings"],
];

@customElement("track-page")
export class TrackPage extends LitElement {
  static styles = css`
    :host { display: flex; height: 625px; overflow: hidden; font: 14px Roboto, sans-serif; color: #333; background: #fff; }
    .side { width: 75px; flex: none; background: #222a33; border-right: 1px solid #c9cbcd; box-sizing: content-box; }
    .nav { margin: -16px 0 0; }
    .nav div { display: flex; flex-direction: column; align-items: center; height: 53px; font: 500 12px/18px Roboto, sans-serif; color: #fff; }
    .nav ui-icon { width: 20px; height: 20px; flex: none; }
    .nav .fork { width: 15px; height: 18px; margin: 1px 0; }
    .nav .database { width: 21px; } .nav .star { width: 22px; }
    .content { flex: 1; min-width: 0; }
    .shades { display: flex; height: 35px; gap: 42px; padding-left: 22px; overflow: hidden; }
    .shades i { width: 592px; height: 10px; margin-top: -10px; box-shadow: 0 2px 11px rgba(0, 0, 0, 0.22); }
    .shades i + i { width: 596px; }
    .tools { display: flex; height: 34px; padding-left: 20px; }
    .group { display: flex; width: 413px; box-sizing: border-box; border: 1px solid #e4e4e4; border-radius: 4px; background: #f6f6f6; color: #a3a3a3; line-height: 31px; }
    .group span { display: flex; align-items: center; padding: 0 0 1px 9px; box-sizing: border-box; border-right: 1px solid #e0e0e0; white-space: nowrap; }
    .group span:last-child { border: 0; }
    .group ui-icon { width: 15px; height: 15px; margin-right: 5px; color: #999; }
    .a { width: 104px } .group .b { width: 117px; border-color: #ececec; padding-left: 11px } .group .c { width: 28px; padding: 0 } .d { width: 82px } .e { width: 80px }
    .group .d { padding-left: 11px; } .group .e { padding-left: 11px; }
    .group .c ui-icon { width: 8px; height: 5px; margin: 0 0 0 9px; }
    .group .e ui-icon { width: 14px; }
    .export { display: flex; align-items: center; width: 111px; height: 34px; margin-left: 463px; box-sizing: border-box; border: 1px solid #ccc; border-radius: 2px; background: #ececec; padding: 0 0 2px 9px; white-space: nowrap; }
    .export ui-icon { width: 14px; height: 14px; margin-right: 3px; }
    .pager { display: flex; gap: 7px; height: 30px; margin: 2px 0 0 14px; color: #222; }
    .pager > span { width: 30px; height: 30px; box-sizing: border-box; display: flex; align-items: center; justify-content: center; background: #ededed; color: #c6c6c6; border-radius: 3px; }
    .pager > .cur { background: #fff; border: 1px solid #e4e4e4; color: #222; padding-bottom: 1px; border-radius: 2px; }
    .pager ui-icon { width: 8px; height: 12px; }
    .pager > .sel { width: 103px; margin-left: 8px; background: #fff; border: 1px solid #ddd; border-radius: 2px; color: #111; justify-content: flex-start; padding-left: 11px; }
    .pager .sel ui-icon { width: 10px; height: 7px; margin-left: 18px; }
    .bottom { margin: 17px 0 0 1021px; }
    .msg { text-align: center; width: 1278px; padding-top: 76px; }
    h2 { margin: 0; font: 500 24px/33px "Noto Sans", "Open Sans", sans-serif; letter-spacing: -0.58px; -webkit-text-stroke: 0.2px #333; }
    .msg p { margin: 0; font-size: 17.5px; line-height: 21px; }
    .msg a { display: block; color: #2a70a5; line-height: 20px; }
    .scroll { width: 17px; flex: none; background: #f0f0f0; display: flex; flex-direction: column; align-items: center; color: #505050; }
    .scroll ui-icon { width: 7px; height: 4px; }
    .scroll .u { margin-top: 7px; transform: rotate(180deg); }
    .thumb { width: 13px; height: 348px; margin: 223px 0 32px; background: #c1c1c1; }
  `;
  private pager() {
    return html`<span>${icon("triLeft")}</span><span class="cur">1</span><span>${icon("triRight")}</span><span class="sel">Show: 20${icon("chevron")}</span>`;
  }
  render() {
    return html`
      <div class="side"><div class="nav">${NAV.map(([ic, name]) => html`<div>${icon(ic, ic)}${name}</div>`)}</div></div>
      <div class="content">
        <div class="shades"><i></i><i></i></div>
        <div class="tools">
          <div class="group">
            <span class="a">${icon("checkCircle")}Set Status</span><span class="b">${icon("filter")}Add to Filter</span><span class="c">${icon("caretDown")}</span><span class="d">${icon("eyeSlash")}Ignore</span><span class="e">${icon("trash")}Delete</span>
          </div>
          <div class="export">${icon("download")}Export Data</div>
          <div class="pager">${this.pager()}</div>
        </div>
        <error-list></error-list>
        <div class="pager bottom">${this.pager()}</div>
        <div class="msg"><h2>You're viewing all data in a specific time range.</h2><p>There may be more data available if you broaden the time range.</p><a>Clear Time Range</a></div>
      </div>
      <div class="scroll">${icon("caretDown", "u")}<div class="thumb"></div>${icon("caretDown")}</div>`;
  }
}

/* ---------- desktop taskbar ---------- */

const APPS: [string, string][] = [
  ["edge", ""], ["explorer", ""], ["store", ""], ["mail", ""], ["chrome", "front"],
  ["spotify", "open"], ["discord", "open"], ["slack", "open"], ["vscode", "open"],
];

@customElement("task-bar")
export class TaskBar extends LitElement {
  static styles = css`
    :host { display: flex; height: 40px; align-items: center; color: #f2f2f2; font: 12px "Open Sans", "Noto Sans", sans-serif; background: linear-gradient(90deg, #21232c, #26262a 38%, #2b2725 60%, #3b2d27 74%, #372b27 77%, #25241f 83%, #21221c); }
    .start { width: 48px; display: flex; justify-content: center; }
    .find { display: flex; align-items: center; width: 344px; height: 40px; box-sizing: border-box; border: 1px solid #b9b9b9; background: #f1f1f1; color: #2b2b2b; font-size: 15px; letter-spacing: -0.5px; padding-left: 11px; }
    .find ui-icon { width: 17px; height: 17px; margin-right: 11px; }
    .sys { width: 48px; display: flex; justify-content: center; }
    .sys .cortana { width: 18px; height: 18px; }
    .apps { display: flex; margin-left: 2px; }
    .app { width: 49px; height: 40px; display: flex; align-items: center; justify-content: center; flex: none; box-sizing: border-box; }
    .app ui-icon { width: 24px; height: 24px; }
    .app .explorer, .app .spotify { width: 22px; height: 22px; }
    .app.open { background: linear-gradient(#76b9ed, #76b9ed) center bottom / 40px 2px no-repeat; }
    .app.front { background: linear-gradient(#76b9ed, #76b9ed) center bottom / 48px 2px no-repeat, linear-gradient(#69686a, #69686a) center / 48px 40px no-repeat; }
    .tray { display: flex; align-items: center; margin-left: 168px; }
    .tray .up { width: 12px; height: 8px; } .tray .cloud { width: 16px; height: 11px; margin-left: 10px; }
    .tray .battery { width: 16px; height: 12px; margin-left: 8px; } .tray .wifi { width: 12px; height: 12px; margin-left: 11px; }
    .tray .volume { width: 16px; height: 13px; margin-left: 9px; }
    .lang { width: 24px; margin-left: 10px; letter-spacing: -0.4px; }
    .clock { width: 78px; line-height: 18px; text-align: center; letter-spacing: -0.4px; padding-bottom: 1px; }
    .note { width: 16px; height: 16px; margin-left: 4px; }
    .peek { width: 1px; height: 40px; margin-left: 21px; background: #70706c; }
  `;
  render() {
    return html`
      <span class="start">${icon("windows")}</span>
      <div class="find">${icon("lens")}Type here to search</div>
      <span class="sys">${icon("cortana", "cortana")}</span><span class="sys">${icon("taskView")}</span>
      <div class="apps">${APPS.map(([ic, st]) => html`<span class="app ${st}">${icon(ic, ic)}</span>`)}</div>
      <div class="tray">
        ${icon("up", "up")}${icon("cloud", "cloud")}${icon("battery", "battery")}${icon("wifi", "wifi")}${icon("volume", "volume")}
        <span class="lang">ENG</span><div class="clock">10:23 PM<br />5/26/2021</div>${icon("note", "note")}<span class="peek"></span>
      </div>`;
  }
}

@customElement("app-root")
export class AppRoot extends LitElement {
  static styles = css`
    :host { display: flex; flex-direction: column; width: 1366px; height: 768px; overflow: hidden; }
  `;
  render() {
    return html`<browser-chrome></browser-chrome><track-page></track-page><task-bar></task-bar>`;
  }
}
